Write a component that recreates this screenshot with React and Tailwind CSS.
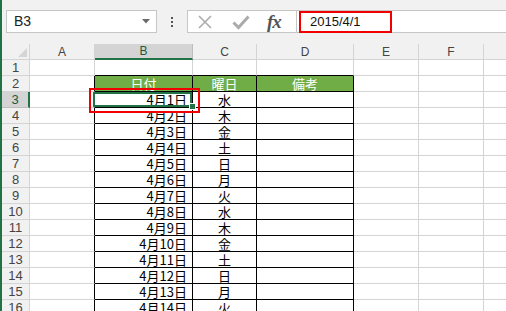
import React from 'react'

const days = ['水', '木', '金', '土', '日', '月', '火']

const rows = Array.from({ length: 17 }, (_, i) => i + 1)

const colHeads = ['A', 'B', 'C', 'D', 'E', 'F', '']

const cellFont = { fontFamily: '"Noto Sans CJK JP", "Liberation Sans", sans-serif' }

const App = () => {
  return (
    <div className="w-[506px] h-[311px] overflow-hidden bg-[#f1f1f1] border-l-2 border-[#217346] relative" style={{ fontFamily: '"Liberation Sans", Arial, sans-serif' }}>
      {/* Formula bar */}
      <div className="h-[44px] flex items-start pt-[10px] pl-[4px]">
        <div className="w-[151px] h-[23px] bg-white border border-[#c6c6c6] flex items-center justify-between pl-[7px] pr-[6px]">
          <span className="text-[14px] text-[#222]">B3</span>
          <svg width="8" height="5" viewBox="0 0 8 5">
            <path d="M0 0 H8 L4 4.5 Z" fill="#6a6a6a" />
          </svg>
        </div>
        <div className="w-[30px] h-[23px] flex flex-col items-center justify-center gap-[2px]">
          <span className="w-[2px] h-[2px] bg-[#555]" />
          <span className="w-[2px] h-[2px] bg-[#555]" />
          <span className="w-[2px] h-[2px] bg-[#555]" />
        </div>
        <div className="w-[110px] h-[23px] bg-white border border-[#c6c6c6] flex items-center pl-[9px]">
          <svg width="16" height="16" viewBox="0 0 16 16">
            <path d="M2 2 L14 14 M14 2 L2 14" stroke="#ababab" strokeWidth="1.6" />
          </svg>
          <svg width="18" height="16" viewBox="0 0 18 16" className="ml-[19px]">
            <path d="M1.5 8.5 L6.5 13.5 L16.5 2.5" stroke="#ababab" strokeWidth="3" fill="none" />
          </svg>
          <span className="ml-[17px] italic font-bold text-[19px] leading-none text-[#555] tracking-[-1px]" style={{ fontFamily: '"Liberation Serif", serif' }}>fx</span>
        </div>
        <div className="flex-1 h-[23px] bg-white border-y border-[#c6c6c6] pl-[2px]">
          <div className="w-[93px] h-[22px] border-2 border-[#f00000] flex items-center pl-[9px]">
            <span className="text-[13px] text-[#111]">2015/4/1</span>
          </div>
        </div>
      </div>

      {/* Sheet */}
      <div className="relative grid grid-cols-[28px_65px_98px_64px_97px_65px_65px_65px]">
        {/* column headers */}
        <div className="h-[16px] bg-[#f1f1f1] border-r border-b border-[#d4d4d4] relative">
          <svg width="9" height="9" viewBox="0 0 9 9" className="absolute right-[2px] bottom-[2px]">
            <path d="M9 0 V9 H0 Z" fill="#d5d5d5" />
          </svg>
        </div>
        {colHeads.map((c, i) => (
          <div
            key={i}
            className={
              c === 'B'
                ? 'h-[16px] bg-[#d4d4d4] border-r border-[#bdbdbd] border-b-2 border-b-[#217346] flex items-center justify-center text-[12px] text-[#215a3b]'
                : 'h-[16px] bg-[#f1f1f1] border-r border-b border-[#d4d4d4] flex items-center justify-center text-[12px] text-[#444]'
            }
          >
            {c}
          </div>
        ))}

        {rows.map((r) => {
          const dateIdx = r - 3
          const isTable = r >= 2
          const isHead = r === 2
          return (
            <React.Fragment key={r}>
              <div
                className={
                  r === 3
                    ? 'h-[16px] bg-[#d4d4d4] border-b border-[#bdbdbd] border-r-2 border-r-[#217346] flex items-center justify-center text-[13px] text-[#215a3b]'
                    : 'h-[16px] bg-[#f1f1f1] border-r border-b border-[#d4d4d4] flex items-center justify-center text-[13px] text-[#444]'
                }
              >
                {r}
              </div>
              {/* A */}
              <div className={`h-[16px] bg-white border-b border-[#d4d4d4] border-r ${isTable ? 'border-r-black' : ''}`} />
              {/* B */}
              <div
                className={`h-[16px] border-r border-b flex items-center text-[13px] leading-[14px] ${
                  r === 1 ? 'bg-white border-r-[#d4d4d4] border-b-black' : 'border-black'
                } ${isHead ? 'bg-[#70ad47] text-white justify-center' : 'bg-white text-black justify-end pr-[5px]'}`}
                style={cellFont}
              >
                {isHead ? '日付' : r >= 3 ? `4月${dateIdx + 1}日` : ''}
              </div>
              {/* C */}
              <div
                className={`h-[16px] border-r border-b flex items-center justify-center text-[13px] leading-[14px] ${
                  r === 1 ? 'bg-white border-r-[#d4d4d4] border-b-black' : 'border-black'
                } ${isHead ? 'bg-[#70ad47] text-white' : 'bg-white text-black'}`}
                style={cellFont}
              >
                {isHead ? '曜日' : r >= 3 ? days[dateIdx % 7] : ''}
              </div>
              {/* D */}
              <div
                className={`h-[16px] border-r border-b flex items-center justify-center text-[13px] leading-[14px] ${
                  r === 1 ? 'bg-white border-r-[#d4d4d4] border-b-black' : 'border-black'
                } ${isHead ? 'bg-[#70ad47] text-white' : 'bg-white'}`}
                style={cellFont}
              >
                {isHead ? '備考' : ''}
              </div>
              <div className="h-[16px] bg-white border-r border-b border-[#d4d4d4]" />
              <div className="h-[16px] bg-white border-r border-b border-[#d4d4d4]" />
              <div className="h-[16px] bg-white border-b border-[#d4d4d4]" />
            </React.Fragment>
          )
        })}

        {/* active cell B3 */}
        <div className="absolute left-[91px] top-[48px] w-[99px] h-[15px] border-2 border-[#217346]" />
        <div className="absolute left-[187px] top-[59px] w-[7px] h-[7px] bg-[#217346] border border-white" />
        {/* annotation */}
        <div className="absolute left-[87px] top-[44px] w-[111px] h-[25px] border-2 border-[#f00000]" />
      </div>
    </div>
  )
}

export default App
